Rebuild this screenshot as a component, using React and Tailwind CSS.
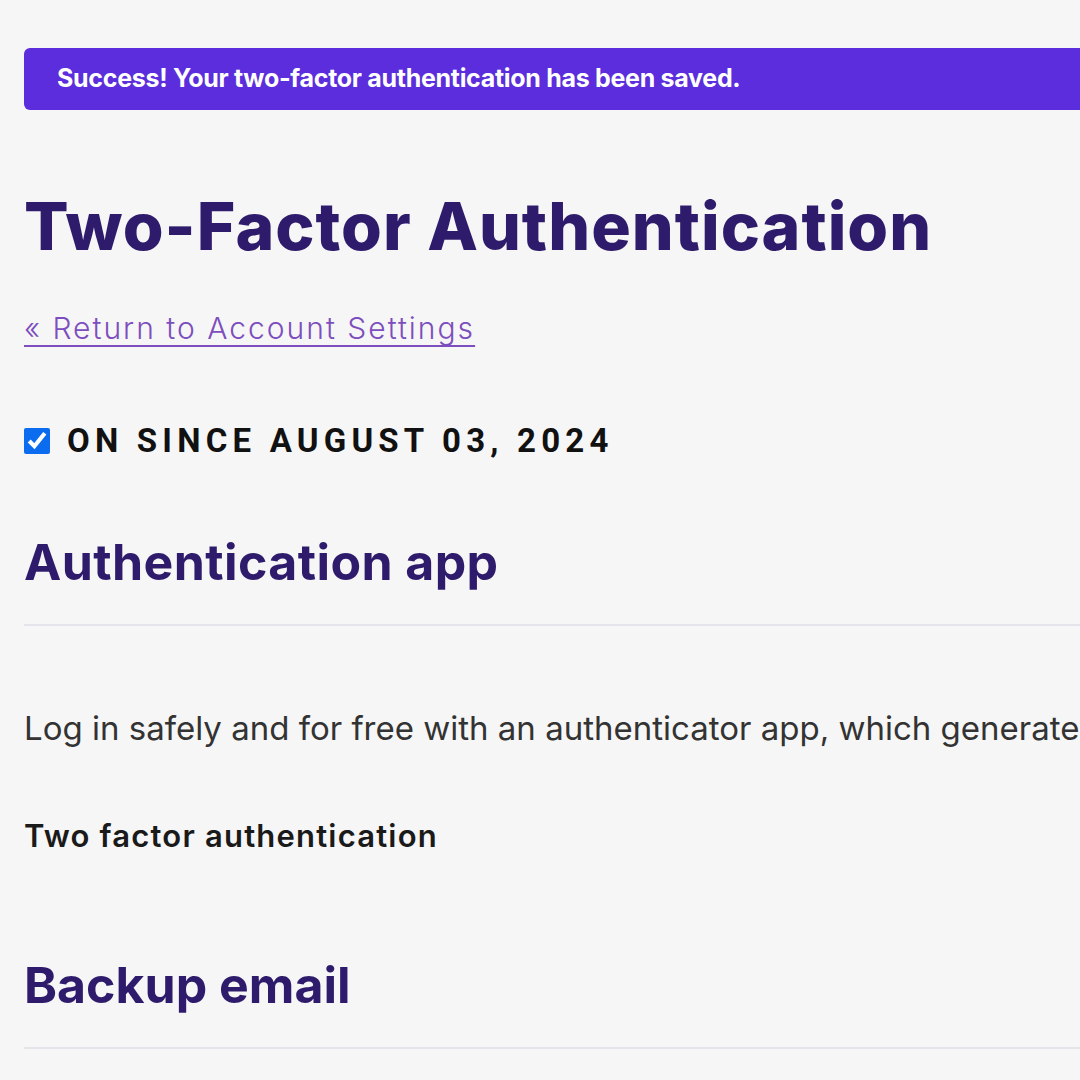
export default function App() {
  return (
    <div className="w-[1080px] h-[1080px] overflow-hidden bg-[#f6f6f6] font-['Inter',sans-serif]">
      <div className="w-[1400px] pl-[24px] pt-[48px]">
        <div className="h-[62px] rounded-[6px] bg-[#5b2ddd] flex items-center pl-[33px]">
          <span className="text-[25px] font-bold text-white tracking-[-0.3px]">
            Success! Your two-factor authentication has been saved.
          </span>
        </div>

        <h1 className="mt-[76px] text-[66px] leading-[80px] font-extrabold text-[#2e1b6b] tracking-[1px]">
          Two-Factor Authentication
        </h1>

        <a href="#" className="block mt-[42px] text-[30px] leading-[40px] font-light text-[#7d4ebd] tracking-[2px] underline underline-offset-[6px] decoration-[2px]">
          « Return to Account Settings
        </a>

        <div className="mt-[73px] flex items-center gap-[17px]">
          <input type="checkbox" defaultChecked className="w-[26px] h-[26px] accent-[#0b6cf0]" />
          <span className="text-[33px] leading-[40px] font-bold tracking-[5.2px] text-[#111] font-['Roboto',sans-serif]">
            ON SINCE AUGUST 03, 2024
          </span>
        </div>

        <h2 className="mt-[71px] text-[50px] leading-[60px] font-bold text-[#2e1b6b] tracking-[0.4px]">
          Authentication app
        </h2>
        <div className="mt-[32px] h-[2px] bg-[#e4e4ea]" />

        <p className="mt-[80px] text-[33px] leading-[44px] text-[#333] whitespace-nowrap">
          Log in safely and for free with an authenticator app, which generates one-time codes for you.
        </p>

        <p className="mt-[66px] text-[31px] leading-[40px] font-semibold text-[#1a1a1a] tracking-[1.2px]">
          Two factor authentication
        </p>

        <h2 className="mt-[99px] text-[50px] leading-[60px] font-bold text-[#2e1b6b]">
          Backup email
        </h2>
        <div className="mt-[32px] h-[2px] bg-[#e4e4ea]" />
      </div>
    </div>
  );
}
